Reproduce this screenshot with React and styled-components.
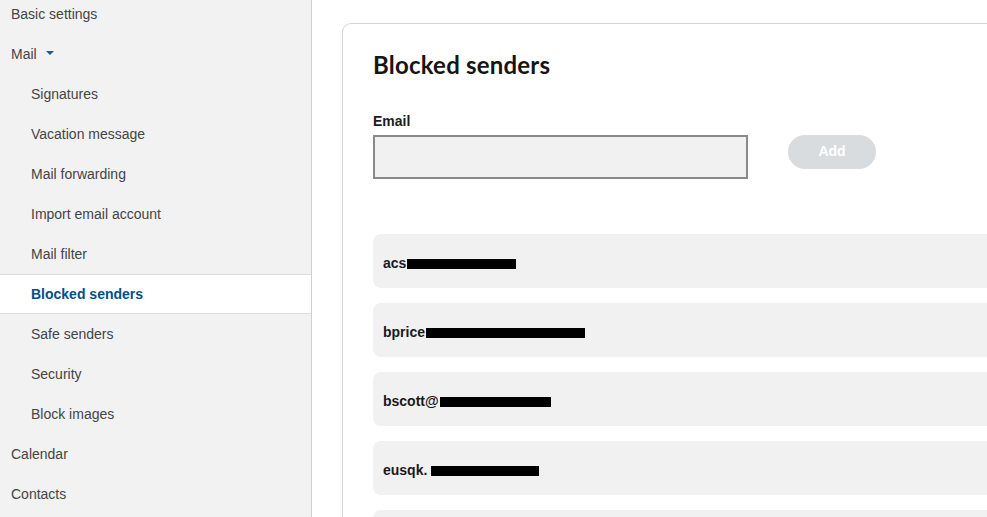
import React from "react";
import styled, { createGlobalStyle } from "styled-components";

const GlobalStyles = createGlobalStyle`
  html, body {
    margin: 0;
    padding: 0;
    background: #fff;
    overflow: hidden;
  }
  body {
    font-family: "Liberation Sans", Arial, sans-serif;
  }
`;

const menu = [
  { label: "Basic settings", level: 0 },
  { label: "Mail", level: 0, caret: true },
  { label: "Signatures", level: 1 },
  { label: "Vacation message", level: 1 },
  { label: "Mail forwarding", level: 1 },
  { label: "Import email account", level: 1 },
  { label: "Mail filter", level: 1 },
  { label: "Blocked senders", level: 1, active: true },
  { label: "Safe senders", level: 1 },
  { label: "Security", level: 1 },
  { label: "Block images", level: 1 },
  { label: "Calendar", level: 0 },
  { label: "Contacts", level: 0 },
];

const senders = [
  { name: "acs", bar: 109, gap: 1 },
  { name: "bprice", bar: 159, gap: 1 },
  { name: "bscott@", bar: 111, gap: 1 },
  { name: "eusqk.", bar: 108, gap: 4 },
  { name: "", bar: 0, gap: 0 },
];

function App() {
  return (
    <Page>
      <GlobalStyles />
      <Sidebar>
        <MenuList>
          {menu.map((item) => (
            <MenuItem key={item.label} $level={item.level} $active={item.active}>
              {item.label}
              {item.caret && <Caret />}
            </MenuItem>
          ))}
        </MenuList>
      </Sidebar>

      <Main>
        <Card>
          <Title>Blocked senders</Title>
          <Label>Email</Label>
          <FormRow>
            <EmailInput type="text" />
            <AddButton disabled>Add</AddButton>
          </FormRow>

          <SenderList>
            {senders.map((s, i) => (
              <SenderRow key={i}>
                {s.name}
                {s.bar > 0 && <Redacted $w={s.bar} $gap={s.gap} />}
              </SenderRow>
            ))}
          </SenderList>
        </Card>
      </Main>
    </Page>
  );
}

export default App;

const Page = styled.div`
  display: flex;
  height: 517px;
  overflow: hidden;
`;

const Sidebar = styled.nav`
  width: 311px;
  flex-shrink: 0;
  background: #f2f2f2;
  border-right: 1px solid #cfcfcf;
  overflow: hidden;
`;

const MenuList = styled.div`
  display: flex;
  flex-direction: column;
  margin-top: -6px;
`;

const MenuItem = styled.div`
  height: 40px;
  box-sizing: border-box;
  display: flex;
  align-items: center;
  padding-left: ${(p) => (p.$level ? "31px" : "11px")};
  font-size: 14px;
  color: ${(p) => (p.$active ? "#004f8c" : "#444")};
  font-weight: ${(p) => (p.$active ? 700 : 400)};
  background: ${(p) => (p.$active ? "#fff" : "transparent")};
  border-top: 1px solid ${(p) => (p.$active ? "#dcdcdc" : "transparent")};
  border-bottom: 1px solid ${(p) => (p.$active ? "#dcdcdc" : "transparent")};
`;

const Caret = styled.span`
  display: inline-block;
  margin-left: 9px;
  margin-top: -2px;
  width: 0;
  height: 0;
  border-left: 4px solid transparent;
  border-right: 4px solid transparent;
  border-top: 4px solid #1b5b9a;
`;

const Main = styled.main`
  flex: 1;
  padding: 23px 0 0 30px;
  overflow: hidden;
`;

const Card = styled.section`
  border: 1px solid #d6d6d6;
  border-right: none;
  border-bottom: none;
  border-radius: 9px 0 0 0;
  padding: 26px 0 0 30px;
  min-height: 520px;
`;

const Title = styled.h1`
  margin: 0;
  font-family: "Lato", "Noto Sans", sans-serif;
  font-weight: 700;
  font-size: 24px;
  line-height: 30px;
  color: #151515;
  letter-spacing: 0.2px;
`;

const Label = styled.div`
  margin-top: 32px;
  font-size: 14px;
  font-weight: 700;
  color: #1c1c1c;
  line-height: 18px;
`;

const FormRow = styled.div`
  display: flex;
  align-items: flex-start;
  gap: 40px;
  margin-top: 5px;
`;

const EmailInput = styled.input`
  width: 375px;
  height: 44px;
  box-sizing: border-box;
  background: #f1f1f1;
  border: 2px solid #8a8a8a;
  border-radius: 0;
  outline: none;
  margin: 0;
`;

const AddButton = styled.button`
  width: 88px;
  height: 34px;
  border: none;
  border-radius: 17px;
  background: #d9dcdf;
  color: #fff;
  font-family: "Liberation Sans", Arial, sans-serif;
  font-size: 14px;
  font-weight: 700;
  padding: 0 0 2px;
`;

const SenderList = styled.div`
  display: flex;
  flex-direction: column;
  gap: 15px;
  margin-top: 55px;
`;

const SenderRow = styled.div`
  height: 54px;
  box-sizing: border-box;
  background: #f1f1f1;
  border-radius: 8px 0 0 8px;
  display: flex;
  align-items: center;
  padding: 3px 0 0 10px;
  font-size: 14px;
  font-weight: 700;
  color: #1a1a1a;
`;

const Redacted = styled.span`
  display: inline-block;
  width: ${(p) => p.$w}px;
  height: 10px;
  margin-left: ${(p) => p.$gap}px;
  margin-top: 2px;
  background: #000;
`;
